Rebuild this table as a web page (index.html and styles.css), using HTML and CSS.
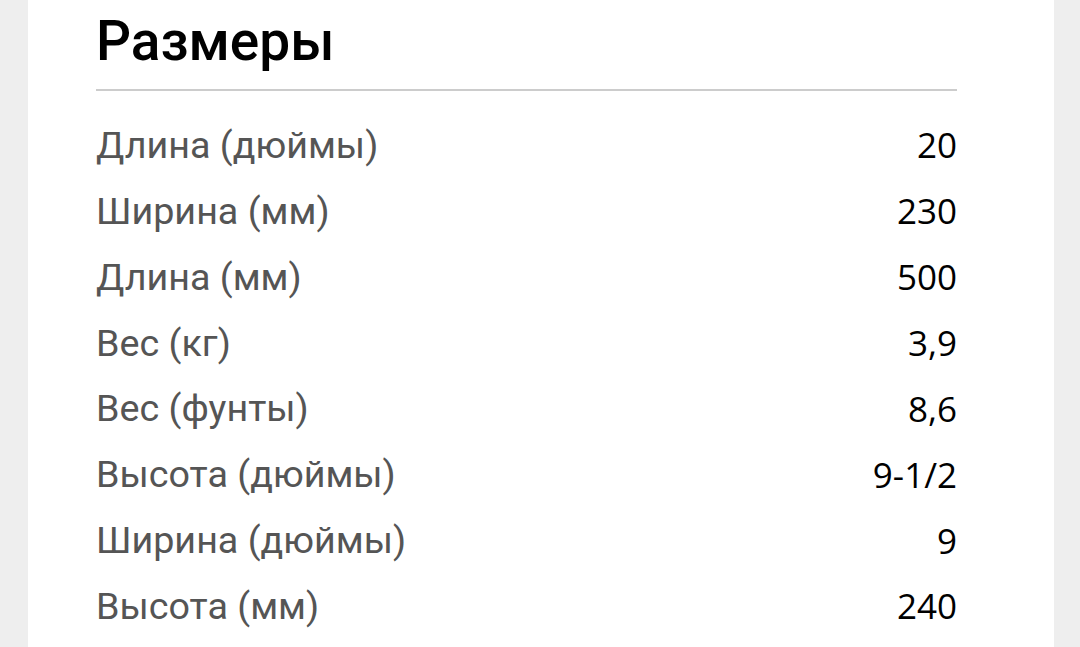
FILE: index.html
```html
<!DOCTYPE html>
<html lang="ru">
<head>
<meta charset="utf-8">
<title>Размеры</title>
<link rel="stylesheet" href="styles.css">
</head>
<body>
<div class="page">
  <section class="card">
    <h2 class="title">Размеры</h2>
    <div class="divider"></div>
    <dl class="specs">
      <div class="row"><dt class="label">Длина (дюймы)</dt><dd class="value">20</dd></div>
      <div class="row"><dt class="label">Ширина (мм)</dt><dd class="value">230</dd></div>
      <div class="row"><dt class="label">Длина (мм)</dt><dd class="value">500</dd></div>
      <div class="row"><dt class="label">Вес (кг)</dt><dd class="value">3,9</dd></div>
      <div class="row"><dt class="label">Вес (фунты)</dt><dd class="value">8,6</dd></div>
      <div class="row"><dt class="label">Высота (дюймы)</dt><dd class="value">9-1/2</dd></div>
      <div class="row"><dt class="label">Ширина (дюймы)</dt><dd class="value">9</dd></div>
      <div class="row"><dt class="label">Высота (мм)</dt><dd class="value">240</dd></div>
    </dl>
  </section>
</div>
</body>
</html>
```

FILE: styles.css
```css
html, body {
  margin: 0;
  padding: 0;
  background: #eeeeee;
  height: 100%;
  overflow: hidden;
}
.page {
  display: flex;
  padding: 0 26px 0 28px;
  height: 100%;
}
.card {
  flex: 1;
  background: #ffffff;
  padding: 6px 97px 0 68px;
}
.title {
  margin: 0;
  font-family: Roboto, "Noto Sans", sans-serif;
  font-weight: 500;
  font-size: 55px;
  line-height: 70px;
  color: #000;
}
.divider {
  height: 2px;
  background: #cccccc;
  margin-top: 13px;
}
.specs {
  margin: 0;
  padding-top: 21px;
  display: flex;
  flex-direction: column;
}
.row {
  display: flex;
  justify-content: space-between;
  align-items: center;
  height: 65.86px;
}
.label {
  margin: 0;
  font-family: Roboto, "Noto Sans", sans-serif;
  font-size: 37.7px;
  color: #555555;
}
.value {
  margin: 0;
  font-family: "Open Sans", "Noto Sans", sans-serif;
  font-size: 35px;
  color: #000;
}
```
